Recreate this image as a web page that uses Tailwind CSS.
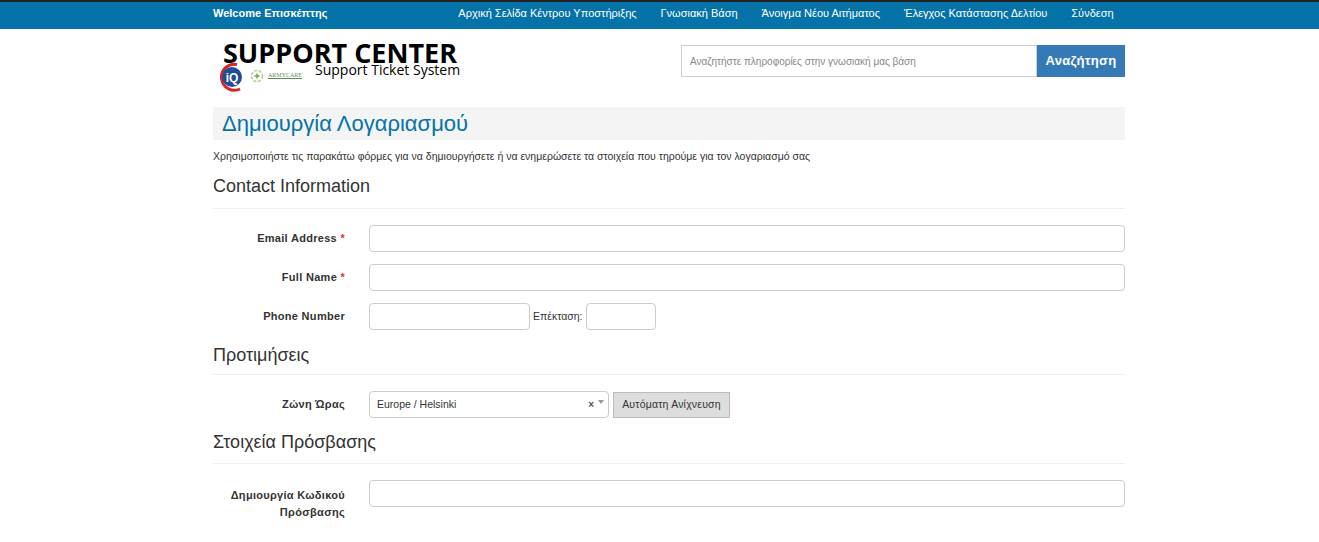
<!DOCTYPE html>
<html lang="en">
  <head>
    <title>Support Center</title>
    <meta charset="utf-8" />
    <script src="https://cdn.jsdelivr.net/npm/@tailwindcss/browser@4"></script>
  </head>
  <body class="bg-white h-[542px] overflow-hidden font-['Liberation_Sans',Arial,sans-serif] text-[#333]">
    <!-- top bar -->
    <div class="h-[29px] bg-[#0573a8] border-t-2 border-[#222]">
      <div class="w-[912px] ml-[213px] flex items-center h-[22px] text-[11px] text-white">
        <span class="font-bold">Welcome Επισκέπτης</span>
        <div class="ml-[131px] flex gap-[24px]">
          <span>Αρχική Σελίδα Κέντρου Υποστήριξης</span>
          <span>Γνωσιακή Βάση</span>
          <span>Άνοιγμα Νέου Αιτήματος</span>
          <span>Έλεγχος Κατάστασης Δελτίου</span>
          <span>Σύνδεση</span>
        </div>
      </div>
    </div>

    <div class="w-[912px] ml-[213px]">
      <!-- logo and search -->
      <div class="h-[78px] flex justify-between items-start">
        <div class="relative w-[245px] h-[78px]">
          <span class="absolute left-[10px] top-[8px] text-[27px] leading-[32px] font-bold text-black font-['Open_Sans',sans-serif] whitespace-nowrap">SUPPORT CENTER</span>
          <span class="absolute left-[102px] top-[32px] text-[14px] leading-[18px] text-black font-['Open_Sans',sans-serif] whitespace-nowrap">Support Ticket System</span>
          <svg class="absolute left-[3px] top-[33px]" width="30" height="30" viewBox="0 0 30 30">
            <path d="M21 2.5A13 13 0 1 0 24 27" fill="none" stroke="#d8232a" stroke-width="3" />
            <circle cx="16" cy="15" r="10" fill="#1f4e96" />
            <text x="16" y="19.5" text-anchor="middle" font-family="Liberation Sans" font-weight="bold" font-size="12" fill="#fff">iQ</text>
          </svg>
          <svg class="absolute left-[37px] top-[40px]" width="14" height="14" viewBox="0 0 14 14">
            <circle cx="7" cy="7" r="5.5" fill="none" stroke="#a9cf8e" stroke-width="1.5" stroke-dasharray="3 1.5" />
            <path d="M7 4.5v5M4.5 7h5" stroke="#6aa84f" stroke-width="1.5" />
          </svg>
          <span class="absolute left-[55px] top-[41px] text-[6px] leading-[10px] text-[#5f8f5a] underline font-['Liberation_Serif',serif]">ARMYCARE</span>
        </div>
        <div class="flex mt-[16px]">
          <div class="w-[356px] h-[32px] border border-[#ccc] bg-white flex items-center pl-[8px] text-[10px] text-[#888]">Αναζητήστε πληροφορίες στην γνωσιακή μας βάση</div>
          <button class="w-[88px] h-[32px] bg-[#337ab7] text-white text-[13px] font-bold tracking-[0.3px]">Αναζήτηση</button>
        </div>
      </div>

      <!-- page title -->
      <div class="h-[33px] bg-[#f4f4f4] pl-[9px] text-[22px] leading-[33px] text-[#0573a8]">Δημιουργία Λογαριασμού</div>
      <p class="mt-[9px] text-[10.5px] leading-[15px]">Χρησιμοποιήστε τις παρακάτω φόρμες για να δημιουργήσετε ή να ενημερώσετε τα στοιχεία που τηρούμε για τον λογαριασμό σας</p>

      <!-- contact information -->
      <div class="mt-[9px] h-[36px] border-b border-[#eee] text-[18px] leading-[26px]">Contact Information</div>
      <div class="mt-[16px] flex flex-col gap-[12px]">
        <div class="flex items-center">
          <label class="w-[132px] text-right text-[11px] font-bold tracking-[0.3px]">Email Address <span class="text-[#d33]">*</span></label>
          <input class="ml-[24px] flex-1 h-[27px] border border-[#ccc] rounded-[4px]" />
        </div>
        <div class="flex items-center">
          <label class="w-[132px] text-right text-[11px] font-bold tracking-[0.3px]">Full Name <span class="text-[#d33]">*</span></label>
          <input class="ml-[24px] flex-1 h-[27px] border border-[#ccc] rounded-[4px]" />
        </div>
        <div class="flex items-center">
          <label class="w-[132px] text-right text-[11px] font-bold tracking-[0.3px]">Phone Number</label>
          <input class="ml-[24px] w-[161px] h-[27px] border border-[#ccc] rounded-[4px]" />
          <span class="ml-[3px] text-[10.5px]">Επέκταση:</span>
          <input class="ml-[3px] w-[70px] h-[27px] border border-[#ccc] rounded-[4px]" />
        </div>
      </div>

      <!-- preferences -->
      <div class="mt-[12px] h-[33px] border-b border-[#eee] text-[18px] leading-[26px]">Προτιμήσεις</div>
      <div class="mt-[16px] flex items-center">
        <label class="w-[132px] text-right text-[11px] font-bold tracking-[0.3px]">Ζώνη Ώρας</label>
        <div class="ml-[24px] w-[240px] h-[27px] border border-[#ccc] rounded-[4px] flex items-center pl-[7px] text-[10.5px]">
          Europe / Helsinki
          <span class="ml-auto text-[10px] font-bold text-[#555]">×</span>
          <span class="ml-[4px] mr-[4px] mb-[5px] w-0 h-0 border-x-[3.5px] border-x-transparent border-t-[4px] border-t-[#999]"></span>
        </div>
        <button class="ml-[4px] w-[117px] h-[26px] bg-[#ddd] border border-[#bbb] text-[10.5px] tracking-[0.2px]">Αυτόματη Ανίχνευση</button>
      </div>

      <!-- access -->
      <div class="mt-[11px] h-[35px] border-b border-[#eee] text-[18px] leading-[26px]">Στοιχεία Πρόσβασης</div>
      <div class="mt-[16px] flex items-start">
        <label class="w-[132px] mt-[7px] text-right text-[11px] leading-[17px] font-bold tracking-[0.3px]">Δημιουργία Κωδικού Πρόσβασης</label>
        <input class="ml-[24px] flex-1 h-[27px] border border-[#ccc] rounded-[4px]" />
      </div>
      <div class="mt-[28px] flex">
        <input class="ml-[156px] flex-1 h-[27px] border border-[#ccc] rounded-[4px]" />
      </div>
    </div>
  </body>
</html>
